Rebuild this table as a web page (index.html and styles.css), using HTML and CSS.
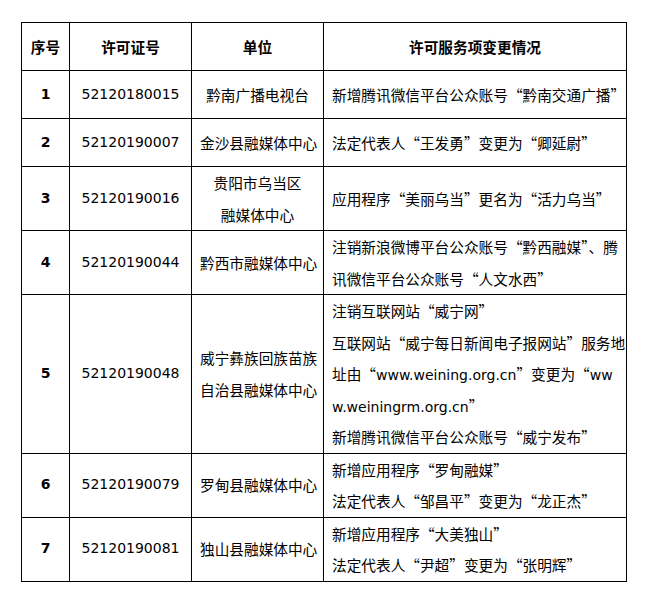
FILE: index.html
```html
<!DOCTYPE html>
<html lang="zh-CN">
<head>
<meta charset="utf-8">
<link rel="stylesheet" href="styles.css">
</head>
<body>
<table class="grid">
  <colgroup>
    <col class="c1"><col class="c2"><col class="c3"><col class="c4">
  </colgroup>
  <thead>
    <tr class="short">
      <th>序号</th><th>许可证号</th><th>单位</th><th>许可服务项变更情况</th>
    </tr>
  </thead>
  <tbody>
    <tr class="short">
      <td class="num">1</td><td class="lic">52120180015</td><td class="unit">黔南广播电视台</td>
      <td class="desc">新增腾讯微信平台公众账号“黔南交通广播”</td>
    </tr>
    <tr class="short">
      <td class="num">2</td><td class="lic">52120190007</td><td class="unit">金沙县融媒体中心</td>
      <td class="desc">法定代表人“王发勇”变更为“卿延尉”</td>
    </tr>
    <tr>
      <td class="num">3</td><td class="lic">52120190016</td><td class="unit">贵阳市乌当区<br>融媒体中心</td>
      <td class="desc">应用程序“美丽乌当”更名为“活力乌当”</td>
    </tr>
    <tr>
      <td class="num">4</td><td class="lic">52120190044</td><td class="unit">黔西市融媒体中心</td>
      <td class="desc">注销新浪微博平台公众账号“黔西融媒”、腾<br>讯微信平台公众账号“人文水西”</td>
    </tr>
    <tr>
      <td class="num">5</td><td class="lic">52120190048</td><td class="unit">威宁彝族回族苗族<br>自治县融媒体中心</td>
      <td class="desc">注销互联网站“威宁网”<br>互联网站“威宁每日新闻电子报网站”服务地<br>址由“<span class="lat">www.weining.org.cn</span>”变更为“<span class="lat">ww</span><br><span class="lat">w.weiningrm.org.cn</span>”<br>新增腾讯微信平台公众账号“威宁发布”</td>
    </tr>
    <tr>
      <td class="num">6</td><td class="lic">52120190079</td><td class="unit">罗甸县融媒体中心</td>
      <td class="desc">新增应用程序“罗甸融媒”<br>法定代表人“邹昌平”变更为“龙正杰”</td>
    </tr>
    <tr>
      <td class="num">7</td><td class="lic">52120190081</td><td class="unit">独山县融媒体中心</td>
      <td class="desc">新增应用程序“大美独山”<br>法定代表人“尹超”变更为“张明辉”</td>
    </tr>
  </tbody>
</table>
</body>
</html>
```

FILE: styles.css
```css
html, body {
  margin: 0;
  padding: 0;
  background: #ffffff;
}
body {
  padding: 22px 0 0 21px;
  font-family: "Noto Sans CJK SC", sans-serif;
  font-size: 14.67px;
  color: #000000;
}
.grid {
  border-collapse: collapse;
  table-layout: fixed;
  width: 605px;
}
.c1 { width: 48px; }
.c2 { width: 122px; }
.c3 { width: 132px; }
.c4 { width: 303px; }
.grid th,
.grid td {
  border: 1px solid #000000;
  padding: 0 8px;
  line-height: 31.5px;
  vertical-align: middle;
  text-align: center;
  white-space: nowrap;
  overflow: hidden;
}
.grid tr.short {
  height: 48px;
}
.grid th {
  font-weight: bold;
}
.num {
  font-family: "DejaVu Sans", sans-serif;
  font-weight: bold;
  font-size: 14px;
}
.lic {
  font-family: "DejaVu Sans", sans-serif;
  font-size: 14px;
}
.unit {
  padding: 0 2px;
}
.grid td.desc {
  text-align: left;
  padding-left: 8px;
  padding-right: 2px;
}
.lat {
  font-family: "DejaVu Sans", sans-serif;
  font-size: 14px;
  line-height: 14px;
}
```
